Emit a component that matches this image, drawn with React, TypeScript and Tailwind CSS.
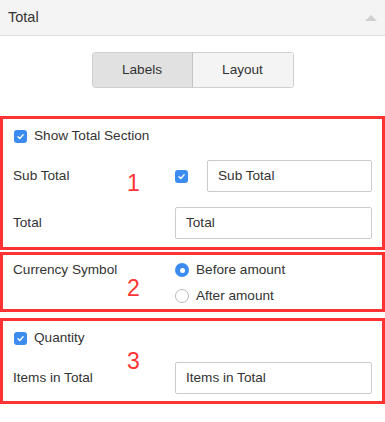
import React from "react";

const font = { fontFamily: '"Liberation Sans", Arial, sans-serif' };

function Check() {
  return (
    <span className="flex h-[13px] w-[13px] items-center justify-center rounded-[3px] bg-[#3c8cf0]">
      <svg width="9" height="9" viewBox="0 0 10 10" fill="none">
        <path d="M2.2 5.3 L4.2 7.2 L7.9 3" stroke="white" strokeWidth="1.5" strokeLinecap="round" strokeLinejoin="round" />
      </svg>
    </span>
  );
}

function Radio({ on }: { on?: boolean }) {
  return on ? (
    <span className="flex h-[14px] w-[14px] items-center justify-center rounded-full bg-[#3c8cf0]">
      <span className="h-[5px] w-[5px] rounded-full bg-white" />
    </span>
  ) : (
    <span className="h-[14px] w-[14px] rounded-full border border-[#b9b9b9] bg-white" />
  );
}

function Input({ value, className }: { value: string; className: string }) {
  return (
    <div className={`flex h-[32px] items-center rounded-[2px] border border-[#cccccc] bg-white pl-[10px] text-[13.6px] text-[#333] ${className}`}>
      {value}
    </div>
  );
}

function Num({ n, top }: { n: string; top: string }) {
  return (
    <span className={`absolute left-[124px] ${top} text-[23px] leading-none text-[#ff3333]`}>{n}</span>
  );
}

export default function App() {
  return (
    <div className="w-[385px] h-[422px] bg-white text-[13.6px] text-[#333]" style={font}>
      <div className="flex h-[36px] items-center justify-between border-b border-[#dddddd] bg-[#f4f4f4] pl-[8px] pr-[8px]">
        <span className="text-[14.5px] text-[#333]">Total</span>
        <svg width="12" height="6" viewBox="0 0 12 6">
          <path d="M0 6 L6 0 L12 6 Z" fill="#d0d0d0" />
        </svg>
      </div>

      <div className="mt-[16px] flex justify-center">
        <div className="flex h-[36px] w-[202px] overflow-hidden rounded-[3px] border border-[#cfcfcf]">
          <div className="flex w-[100px] items-center justify-center border-r border-[#c4c4c4] bg-[#e1e1e1]">Labels</div>
          <div className="flex flex-1 items-center justify-center bg-[#f4f4f4]">Layout</div>
        </div>
      </div>

      <div className="relative mt-[28px] h-[134px] border-[3px] border-[#ff3333] px-[10px] pb-[8px]">
        <Num n="1" top="top-[53px]" />
        <div className="flex h-[34px] items-center gap-[7px] pl-[1px]">
          <Check />
          <span>Show Total Section</span>
        </div>
        <div className="mt-[7px] flex h-[32px] items-center">
          <span className="w-[162px]">Sub Total</span>
          <Check />
          <Input value="Sub Total" className="ml-[19px] flex-1" />
        </div>
        <div className="mt-[15px] flex h-[32px] items-center">
          <span className="w-[162px]">Total</span>
          <Input value="Total" className="flex-1" />
        </div>
      </div>

      <div className="relative mt-[2px] h-[60px] border-[3px] border-[#ff3333] px-[10px] pt-[2px]">
        <Num n="2" top="top-[22px]" />
        <div className="flex">
          <div className="flex h-[26px] w-[162px] items-center">Currency Symbol</div>
          <div className="flex flex-col">
            <div className="flex h-[26px] items-center gap-[7px]">
              <Radio on />
              <span>Before amount</span>
            </div>
            <div className="flex h-[26px] items-center gap-[7px]">
              <Radio />
              <span>After amount</span>
            </div>
          </div>
        </div>
      </div>

      <div className="relative mt-[6px] h-[86px] border-[3px] border-[#ff3333] px-[10px]">
        <Num n="3" top="top-[29px]" />
        <div className="flex h-[34px] items-center gap-[7px] pl-[1px]">
          <Check />
          <span>Quantity</span>
        </div>
        <div className="mt-[7px] flex h-[32px] items-center">
          <span className="w-[162px]">Items in Total</span>
          <Input value="Items in Total" className="flex-1" />
        </div>
      </div>
    </div>
  );
}
